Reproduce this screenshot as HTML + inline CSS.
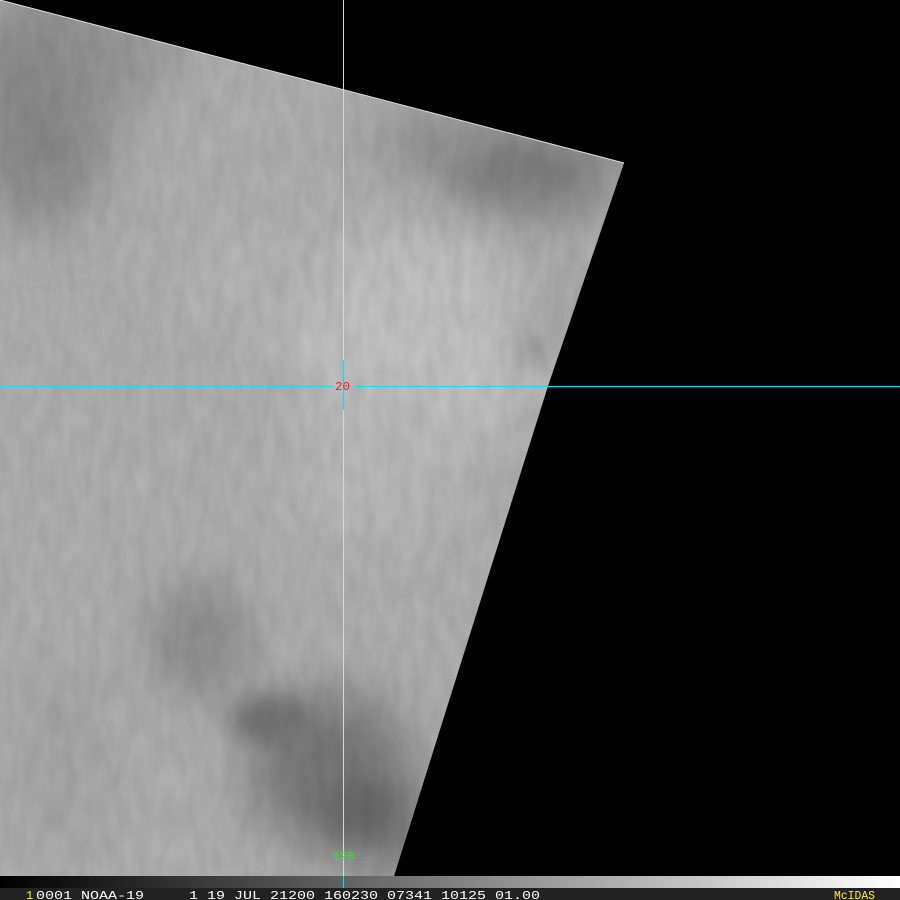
<!DOCTYPE html>
<html><head><style>
html,body{margin:0;padding:0;background:#000;width:900px;height:900px;overflow:hidden}
svg{display:block}
text{font-family:"Liberation Mono",monospace}
</style></head><body>
<svg width="900" height="900" viewBox="0 0 900 900" xmlns="http://www.w3.org/2000/svg">
<defs>
<clipPath id="c"><polygon points="0,0 624,163 548,386 394,876 0,876"/></clipPath>
<filter id="b" x="-50%" y="-50%" width="200%" height="200%"><feGaussianBlur stdDeviation="28"/></filter>
<filter id="b2" x="-50%" y="-50%" width="200%" height="200%"><feGaussianBlur stdDeviation="12"/></filter>
<filter id="n" x="0" y="0" width="100%" height="100%"><feTurbulence type="fractalNoise" baseFrequency="0.08 0.03" numOctaves="2" seed="3"/><feColorMatrix type="matrix" values="0 0 0 0 0  0 0 0 0 0  0 0 0 0 0  0 0 0 0.12 0"/></filter>
<linearGradient id="g" x1="0" x2="1"><stop offset="0" stop-color="#000"/><stop offset="1" stop-color="#fff"/></linearGradient>
</defs>
<rect width="900" height="900" fill="#000"/>
<g clip-path="url(#c)">
<rect width="700" height="880" fill="#b4b4b4"/>
<g filter="url(#b)">
<ellipse cx="40" cy="110" rx="70" ry="120" fill="#8c8c8c"/>
<ellipse cx="120" cy="50" rx="60" ry="50" fill="#9a9a9a"/>
<ellipse cx="530" cy="170" rx="90" ry="45" fill="#7c7c7c"/>
<ellipse cx="420" cy="140" rx="50" ry="30" fill="#929292"/>
<ellipse cx="420" cy="340" rx="130" ry="110" fill="#c6c6c6"/>
<ellipse cx="380" cy="470" rx="90" ry="80" fill="#bebebe"/>
<ellipse cx="250" cy="280" rx="80" ry="60" fill="#bababa"/>
<ellipse cx="330" cy="770" rx="80" ry="80" fill="#7a7a7a"/>
<ellipse cx="200" cy="640" rx="50" ry="60" fill="#8e8e8e"/>
<ellipse cx="390" cy="830" rx="40" ry="50" fill="#747474"/>
<ellipse cx="60" cy="760" rx="60" ry="100" fill="#aaaaaa"/>
<ellipse cx="560" cy="310" rx="40" ry="40" fill="#a6a6a6"/>
</g>
<g filter="url(#b2)">
<ellipse cx="270" cy="720" rx="40" ry="25" fill="#757575"/>
<ellipse cx="360" cy="810" rx="40" ry="30" fill="#6c6c6c"/>
<ellipse cx="530" cy="350" rx="12" ry="12" fill="#878787"/>
</g>
<rect width="700" height="880" filter="url(#n)"/>
</g>
<line x1="0" y1="0" x2="624" y2="163" stroke="#ddd" stroke-width="1"/>
<line x1="343.5" y1="0" x2="343.5" y2="876" stroke="#d8d8d8" stroke-width="1"/>
<line x1="0" y1="386.5" x2="333" y2="386.5" stroke="#00e5ee" stroke-width="1"/>
<line x1="355" y1="386.5" x2="900" y2="386.5" stroke="#00e5ee" stroke-width="1"/>
<line x1="343.5" y1="360" x2="343.5" y2="410" stroke="#00e5ee" stroke-width="1"/>
<text x="335" y="390" font-size="12" fill="#ff1a1a" textLength="15" lengthAdjust="spacingAndGlyphs">20</text>
<text x="332" y="860" font-size="12" fill="#22ee22" textLength="23" lengthAdjust="spacingAndGlyphs">120</text>
<rect x="0" y="876" width="900" height="12" fill="url(#g)"/>
<line x1="343.5" y1="876" x2="343.5" y2="888" stroke="#00e5ee" stroke-width="1"/>
<rect x="0" y="888" width="900" height="12" fill="#222"/>
<text x="26" y="899" font-size="12" fill="#ffee22">1</text>
<text x="36" y="899" font-size="12" fill="#fff" xml:space="preserve" textLength="504" lengthAdjust="spacingAndGlyphs">0001 NOAA-19     1 19 JUL 21200 160230 07341 10125 01.00</text>
<text x="834" y="899" font-size="12" fill="#ffee22" textLength="41" lengthAdjust="spacingAndGlyphs">McIDAS</text>
</svg>
</body></html>
